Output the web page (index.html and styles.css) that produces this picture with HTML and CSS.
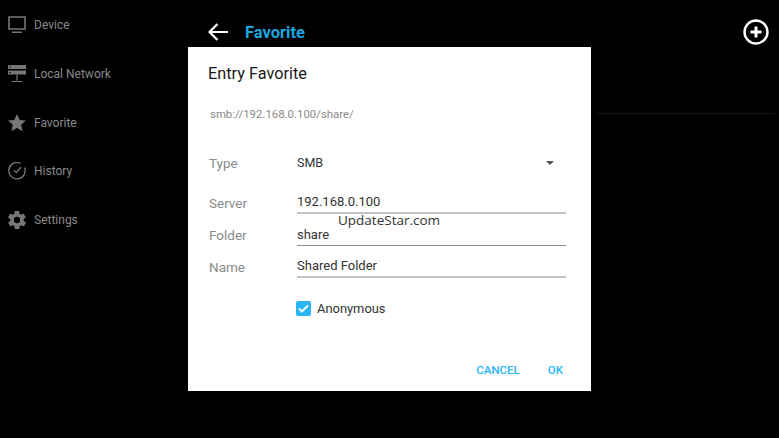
FILE: index.html
```html
<!DOCTYPE html>
<html>
<head>
    <title>Favorite</title>
    <link rel="stylesheet" href="styles.css">
</head>
<body>
    <div class="screen">
        <!-- Left menu -->
        <nav class="sidebar">
            <div class="nav-item">
                <svg class="nav-icon" viewBox="0 0 18 18"><path d="M1 1h16v12H1z" fill="none" stroke="#777" stroke-width="1.6"/><path d="M4 15.500h10v1.500H4z" fill="#777"/></svg>
                <span>Device</span>
            </div>
            <div class="nav-item">
                <svg class="nav-icon" viewBox="0 0 18 18"><path d="M0 0h18v4H0zM0 5.500h18v4H0z" fill="#777"/><path d="M9 9.500v6M3.500 16.500h11" stroke="#777" stroke-width="1.200" fill="none"/><path d="M1.500 1.500h1.500v1H1.500zM1.500 7h1.500v1H1.500z" fill="#000"/></svg>
                <span>Local Network</span>
            </div>
            <div class="nav-item">
                <svg class="nav-icon" viewBox="0 0 18 18"><path d="M9 0l2.700 6 6.300.6-4.800 4.200 1.500 6.500L9 13.900l-5.700 3.400 1.500-6.500L0 6.600 6.300 6z" fill="#777"/></svg>
                <span>Favorite</span>
            </div>
            <div class="nav-item">
                <svg class="nav-icon" viewBox="0 0 18 18"><path d="M12.500 1.300A8.200 8.200 0 1 0 16.500 5.500" fill="none" stroke="#777" stroke-width="1.300"/><path d="M5.500 8.500l3 2 4.500-5.500" fill="none" stroke="#777" stroke-width="1.300"/></svg>
                <span>History</span>
            </div>
            <div class="nav-item">
                <svg class="nav-icon" viewBox="2 2 20 20"><path d="M19.400 13c0-.3.100-.6.100-1s0-.7-.1-1l2.100-1.600c.2-.2.200-.4.100-.6l-2-3.500c-.1-.2-.4-.3-.6-.2l-2.500 1c-.5-.4-1.100-.7-1.700-1l-.4-2.600c0-.3-.2-.5-.5-.5h-4c-.3 0-.5.200-.5.400l-.4 2.700c-.6.200-1.200.6-1.700 1l-2.500-1c-.2-.1-.5 0-.6.200l-2 3.500c-.1.200-.1.400.1.600L4.600 11c0 .3-.1.700-.1 1s0 .7.100 1l-2.100 1.600c-.2.200-.2.400-.1.600l2 3.500c.1.200.4.300.6.200l2.500-1c.5.400 1.100.7 1.700 1l.4 2.600c0 .3.200.5.500.5h4c.3 0 .5-.2.500-.4l.4-2.700c.6-.3 1.200-.6 1.700-1l2.500 1c.2.100.5 0 .6-.2l2-3.500c.1-.2.100-.4-.1-.6zM12 15.500a3.500 3.500 0 1 1 0-7 3.500 3.500 0 0 1 0 7z" fill="#777"/></svg>
                <span>Settings</span>
            </div>
        </nav>

        <div class="main">
            <header class="topbar">
                <svg class="back" viewBox="0 0 20 18"><path d="M20 9H2M9.500 1L1.500 9l8 8" fill="none" stroke="#fff" stroke-width="2.200"/></svg>
                <h1>Favorite</h1>
                <svg class="add" viewBox="0 0 26 26"><circle cx="13" cy="13" r="11.500" fill="none" stroke="#fff" stroke-width="2.400"/><path d="M13 7.500v11M7.500 13h11" stroke="#fff" stroke-width="3"/></svg>
            </header>
            <div class="rule"></div>
        </div>

        <!-- Dialog -->
        <div class="dialog">
            <h2>Entry Favorite</h2>
            <p class="path">smb://192.168.0.100/share/</p>

            <div class="form">
                <div class="row row-type">
                    <label>Type</label>
                    <div class="select"><span>SMB</span><i class="caret"></i></div>
                </div>
                <div class="row">
                    <label>Server</label>
                    <div class="field light">192.168.0.100</div>
                </div>
                <div class="row">
                    <label>Folder</label>
                    <div class="field">share</div>
                </div>
                <div class="row">
                    <label>Name</label>
                    <div class="field light">Shared Folder</div>
                </div>
            </div>

            <div class="check">
                <svg class="box" viewBox="0 0 15 15"><rect width="15" height="15" rx="2" fill="#29b6f6"/><path d="M3 7.500l3 3 6-6" fill="none" stroke="#fff" stroke-width="1.800"/></svg>
                <span>Anonymous</span>
            </div>

            <div class="actions">
                <span>CANCEL</span>
                <span>OK</span>
            </div>
        </div>

        <div class="watermark">UpdateStar.com</div>
    </div>
</body>
</html>
```

FILE: styles.css
```css
html, body {
    height: 100%;
    margin: 0;
    padding: 0;
}

body {
    background: #000;
    font-family: 'Roboto', sans-serif;
    overflow: hidden;
}

.screen {
    position: relative;
    display: flex;
    width: 779px;
    height: 438px;
}

.sidebar {
    width: 188px;
    padding-top: 16px;
}

.nav-item {
    display: flex;
    align-items: center;
    gap: 8px;
    height: 18px;
    margin: 0 0 30.75px 8px;
    color: #8a8a8a;
    font-size: 12px;
}

.nav-icon {
    width: 18px;
    height: 18px;
}

.main {
    flex: 1;
}

.topbar {
    display: flex;
    align-items: center;
    height: 26px;
    padding: 19px 10px 0 20px;
}

.topbar h1 {
    margin: 0 0 0 17px;
    flex: 1;
    font-size: 16.500px;
    font-weight: 700;
    color: #1ba6e0;
}

.back {
    width: 20px;
    height: 18px;
}

.add {
    width: 26px;
    height: 26px;
}

.rule {
    height: 1px;
    margin: 68px 4px 0 408px;
    background: #141414;
}

.dialog {
    position: absolute;
    left: 188px;
    top: 47px;
    width: 403px;
    height: 344px;
    box-sizing: border-box;
    padding: 18px 25px 0 20px;
    background: #fff;
}

.dialog h2 {
    margin: 0;
    font-size: 16.300px;
    font-weight: 400;
    line-height: 18px;
    color: #1a1a1a;
}

.path {
    margin: 24px 0 0 2px;
    font-size: 11.400px;
    line-height: 14px;
    color: #8a8a8a;
}

.form {
    margin-top: 34px;
}

.row {
    display: flex;
    align-items: flex-end;
    height: 32px;
}

.row label {
    width: 88px;
    margin-left: 1px;
    padding-bottom: 3px;
    font-size: 13.500px;
    line-height: 16px;
    color: #8a8a8a;
}

.row-type {
    height: 26.500px;
    align-items: flex-start;
}

.row-type label {
    padding-bottom: 0;
}

.select {
    display: flex;
    justify-content: space-between;
    align-items: center;
    flex: 1;
    font-size: 12.500px;
    line-height: 16px;
    color: #333;
}

.caret {
    width: 0;
    height: 0;
    margin-right: 12px;
    border-left: 4px solid transparent;
    border-right: 4px solid transparent;
    border-top: 4px solid #555;
}

.field {
    flex: 1;
    padding: 0 0 2px 0;
    font-size: 13px;
    line-height: 16px;
    color: #333;
    border-bottom: 1px solid #8c8c8c;
}

.field.light {
    border-bottom: 2px solid #c4c4c4;
}

.check {
    display: flex;
    align-items: center;
    gap: 6px;
    margin: 23px 0 0 88px;
    font-size: 12.900px;
    color: #333;
}

.box {
    width: 15px;
    height: 15px;
}

.actions {
    display: flex;
    justify-content: flex-end;
    gap: 28px;
    margin: 47px 3px 0 0;
    font-size: 11.500px;
    font-weight: 500;
    line-height: 14px;
    color: #29b6f6;
}

.watermark {
    position: absolute;
    left: 338px;
    top: 212px;
    font-family: 'Open Sans', sans-serif;
    font-size: 13.500px;
    line-height: 17px;
    color: #333;
}
```
